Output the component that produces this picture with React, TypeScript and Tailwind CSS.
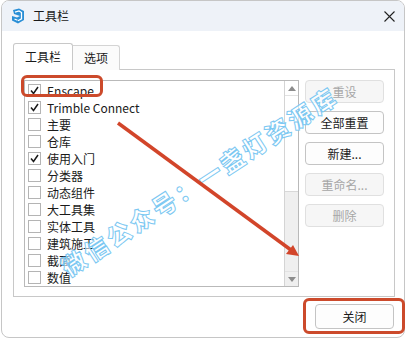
import React from "react";

const items = [
  { label: "Enscape", checked: true },
  { label: "Trimble Connect", checked: true },
  { label: "主要", checked: false },
  { label: "仓库", checked: false },
  { label: "使用入门", checked: true },
  { label: "分类器", checked: false },
  { label: "动态组件", checked: false },
  { label: "大工具集", checked: false },
  { label: "实体工具", checked: false },
  { label: "建筑施工", checked: false },
  { label: "截面", checked: false },
  { label: "数值", checked: false },
];

const buttons = [
  { label: "重设", disabled: true },
  { label: "全部重置", disabled: false },
  { label: "新建...", disabled: false },
  { label: "重命名...", disabled: true },
  { label: "删除", disabled: true },
];

function Checkbox({ checked }: { checked: boolean }) {
  return (
    <div className="w-[13px] h-[13px] border border-[#b4b4b4] bg-white flex items-center justify-center shrink-0">
      {checked && (
        <svg width="11" height="11" viewBox="0 0 11 11">
          <path d="M2 5.5 L4.5 8.5 L9 2" fill="none" stroke="#1a1a1a" strokeWidth="1.5" />
        </svg>
      )}
    </div>
  );
}

export default function App() {
  return (
    <div
      className="relative w-[406px] h-[341px] bg-white overflow-hidden text-[#1a1a1a]"
      style={{ fontFamily: '"Noto Sans CJK SC", "Noto Sans", sans-serif' }}
    >
      {/* Window */}
      <div className="ml-px w-[404px] h-[338px] border border-[#c6c6c6] rounded-[8px] overflow-hidden flex flex-col bg-white">
        {/* Title bar */}
        <div className="h-[30px] bg-[#eef2f8] flex items-center pl-[8px] pr-[9px] shrink-0">
          <svg width="16" height="16" viewBox="0 0 16 16">
            <path d="M3 2 L9 0.5 L14 3 L14 12 L8 15.5 L2 12.5 L2 8 L7 9.5 L10 8 L4 6 Z" fill="#2a8fd6" />
            <path d="M5 4.2 L9 3 L11.5 4.5 L11.5 10.8 L8 12.7" fill="none" stroke="#fff" strokeWidth="1.3" />
            <path d="M4.5 11 L7.5 12.2" stroke="#fff" strokeWidth="1.2" />
          </svg>
          <span className="ml-[7px] text-[12px] leading-none">工具栏</span>
          <div className="flex-1" />
          <svg width="11" height="11" viewBox="0 0 11 11">
            <path d="M0.5 0.5 L10.5 10.5 M10.5 0.5 L0.5 10.5" stroke="#222" strokeWidth="1.1" />
          </svg>
        </div>

        {/* Body */}
        <div className="flex-1 pl-[11px] pt-[12px]">
          {/* Tabs */}
          <div className="flex items-end h-[27px] relative z-10">
            <div className="w-[60px] h-[27px] border border-[#c8c8c8] border-b-0 bg-white rounded-t-[3px] flex items-center justify-center text-[12px] pb-[1px]">
              工具栏
            </div>
            <div className="w-[47px] h-[25px] border border-[#d4d4d4] border-l-0 border-b-0 bg-[#fbfbfb] flex items-center justify-center text-[12px] rounded-tr-[3px]">
              选项
            </div>
          </div>
          {/* Panel */}
          <div className="-mt-px w-[382px] h-[228px] border border-[#c8c8c8] bg-white flex pl-[10px] pt-[10px]">
            {/* List */}
            <div className="w-[275px] h-[207px] border border-[#b9b9b9] flex">
              <div className="flex-1 pt-[1px] pl-[3px]">
                {items.map((it) => (
                  <div key={it.label} className="h-[17px] flex items-center gap-[6px]">
                    <Checkbox checked={it.checked} />
                    <span className="text-[12px] leading-none">{it.label}</span>
                  </div>
                ))}
              </div>
              {/* Scrollbar */}
              <div className="w-[14px] h-full border-l border-[#d4d4d4] flex flex-col bg-white">
                <div className="h-[15px] flex items-center justify-center border-b border-[#e2e2e2]">
                  <svg width="8" height="5" viewBox="0 0 8 5">
                    <path d="M0 5 L4 0 L8 5 Z" fill="#8c8c8c" />
                  </svg>
                </div>
                <div className="flex-1" />
                <div className="h-[80px] bg-[#efefef] border-t border-[#d8d8d8]" />
                <div className="h-[15px] flex items-center justify-center border-t border-[#e2e2e2] bg-[#efefef]">
                  <svg width="8" height="5" viewBox="0 0 8 5">
                    <path d="M0 0 L4 5 L8 0 Z" fill="#8c8c8c" />
                  </svg>
                </div>
              </div>
            </div>
            {/* Buttons */}
            <div className="ml-[6px] flex flex-col gap-[8px]">
              {buttons.map((b) => (
                <div
                  key={b.label}
                  className={
                    b.disabled
                      ? "w-[79px] h-[23px] rounded-[4px] border border-[#e0e0e0] bg-[#f6f6f6] text-[#a6a6a6] text-[12px] flex items-center justify-center"
                      : "w-[79px] h-[23px] rounded-[4px] border border-[#c4c4c4] bg-[#fdfdfd] text-[#1a1a1a] text-[12px] flex items-center justify-center"
                  }
                >
                  {b.label}
                </div>
              ))}
            </div>
          </div>
          {/* Footer */}
          <div className="flex justify-end pr-[10px] mt-[7px]">
            <div className="w-[79px] h-[25px] rounded-[4px] border border-[#c4c4c4] bg-[#fdfdfd] text-[12px] flex items-center justify-center">
              关闭
            </div>
          </div>
        </div>
      </div>

      {/* Watermark */}
      <div className="absolute left-[199px] top-[181px] -translate-x-1/2 -translate-y-1/2 -rotate-[33deg] whitespace-nowrap text-[24px] font-black tracking-[3px] text-white/60 [-webkit-text-stroke:1px_#7cc8f2] pointer-events-none">
        微信公众号：一盏灯资源库
      </div>

      {/* Annotations */}
      <div className="absolute left-[21px] top-[75px] w-[82px] h-[22px] border-[3px] border-[#cc4a2b] rounded-[6px] pointer-events-none" />
      <div className="absolute left-[303px] top-[298px] w-[102px] h-[36px] border-[3px] border-[#cc4a2b] rounded-[6px] pointer-events-none" />
      <svg className="absolute left-0 top-0 pointer-events-none" width="406" height="341">
        <line x1="118" y1="123" x2="291" y2="250" stroke="#d2452a" strokeWidth="3.5" />
        <path d="M299 256 L286 254 L293 245 Z" fill="#d2452a" />
      </svg>
    </div>
  );
}
